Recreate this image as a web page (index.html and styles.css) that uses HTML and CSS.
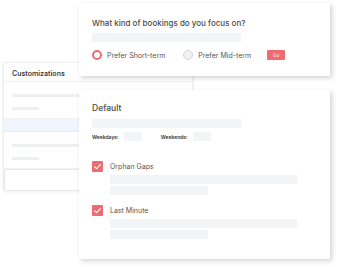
FILE: index.html
```html
<!DOCTYPE html>
<html lang="en">
<head>
    <meta charset="UTF-8">
    <meta name="viewport" content="width=device-width, initial-scale=1.0">
    <title>Booking Preferences</title>
    <link rel="stylesheet" href="styles.css">
</head>
<body>
    <div class="stage">
        <div class="card side">
            <div class="side-head">Customizations</div>
            <div class="side-row">
                <div class="line long"></div>
                <div class="line short"></div>
            </div>
            <div class="side-row active"></div>
            <div class="side-row">
                <div class="line long"></div>
                <div class="line short"></div>
            </div>
            <div class="side-foot"></div>
        </div>

        <div class="card question">
            <h2>What kind of bookings do you focus on?</h2>
            <div class="bar"></div>
            <div class="options">
                <label class="radio checked"><span class="dot"></span>Prefer Short-term</label>
                <label class="radio"><span class="dot"></span>Prefer Mid-term</label>
                <a href="#" class="go">Go</a>
            </div>
        </div>

        <div class="card settings">
            <h2>Default</h2>
            <div class="bar"></div>
            <div class="days">
                <span>Weekdays:</span><span class="box"></span>
                <span class="gap">Weekends:</span><span class="box"></span>
            </div>

            <div class="rule">
                <div class="check">
                    <svg viewBox="0 0 11 11" width="11" height="11"><path d="M2.6 5.8 L4.6 7.6 L8.4 3.6" fill="none" stroke="#fff" stroke-width="1.1" stroke-linecap="round" stroke-linejoin="round"/></svg>
                </div>
                <div class="rule-body">
                    <div class="rule-title">Orphan Gaps</div>
                    <div class="bar wide"></div>
                    <div class="bar half"></div>
                </div>
            </div>

            <div class="rule">
                <div class="check">
                    <svg viewBox="0 0 11 11" width="11" height="11"><path d="M2.6 5.8 L4.6 7.6 L8.4 3.6" fill="none" stroke="#fff" stroke-width="1.1" stroke-linecap="round" stroke-linejoin="round"/></svg>
                </div>
                <div class="rule-body">
                    <div class="rule-title">Last Minute</div>
                    <div class="bar wide"></div>
                    <div class="bar half"></div>
                </div>
            </div>
        </div>
    </div>
</body>
</html>
```

FILE: styles.css
```css
body {
    font-family: Inter, "Open Sans", sans-serif;
    margin: 0;
    padding: 0;
    background-color: #fff;
    color: #4b4b4b;
}
.stage {
    position: relative;
    width: 338px;
    height: 267px;
    overflow: hidden;
}
.card {
    position: absolute;
    background: white;
    box-sizing: border-box;
}
h2 {
    margin: 0;
    font-weight: 500;
    font-size: 8px;
    line-height: 12px;
    color: #4a4a4a;
}
.bar {
    height: 9px;
    width: 149px;
    background-color: #f3f4f6;
}

/* left panel */
.side {
    left: 3px;
    top: 62px;
    width: 190px;
    height: 129px;
    border: 1px solid #eceef1;
    border-radius: 2px;
    box-shadow: 0 1px 4px rgba(0, 0, 0, 0.06);
}
.side-head {
    height: 19px;
    padding: 6px 0 0 8px;
    box-sizing: border-box;
    font-size: 7px;
    font-weight: 600;
    color: #3c3c3c;
    border-bottom: 1px solid #f0f1f3;
}
.side-row {
    height: 37px;
    padding: 12px 0 0 8px;
    box-sizing: border-box;
    border-bottom: 1px solid #f0f1f3;
}
.side-row.active {
    height: 13px;
    background-color: #f1f5fd;
    border-bottom: 1px solid #e8ebf0;
}
.line {
    height: 3px;
    background-color: #eeeff1;
}
.line.long {
    width: 170px;
}
.line.short {
    width: 27px;
    margin-top: 10px;
}
.side-foot {
    margin: 0;
    height: 20px;
    border: 1px solid #e6e8eb;
    border-radius: 2px;
}

/* question card */
.question {
    left: 79px;
    top: 3px;
    width: 251px;
    height: 73px;
    padding: 14px 0 0 13px;
    box-shadow: 2px 2px 5px rgba(0, 0, 0, 0.18);
}
.question .bar {
    margin-top: 4px;
}
.options {
    display: flex;
    align-items: center;
    margin-top: 8px;
    font-size: 7px;
    color: #555;
}
.radio {
    display: flex;
    align-items: center;
    gap: 5px;
    margin-right: 18px;
}
.dot {
    width: 10px;
    height: 10px;
    border-radius: 50%;
    box-sizing: border-box;
    border: 1px solid #d5d5d5;
    background: #f1f1f1;
}
.radio.checked .dot {
    border: 2.5px solid #ef6b72;
    background: #fff;
}
.go {
    margin-left: -2px;
    width: 18px;
    height: 10px;
    line-height: 10px;
    text-align: center;
    background-color: #ef6b72;
    color: #fde8e9;
    font-size: 5px;
    border-radius: 1px;
    text-decoration: none;
}

/* settings card */
.settings {
    left: 79px;
    top: 90px;
    width: 251px;
    height: 169px;
    padding: 12px 0 0 13px;
    box-shadow: 2px 2px 5px rgba(0, 0, 0, 0.18);
}
.settings h2 {
    font-size: 8.5px;
}
.settings .bar {
    margin-top: 5px;
}
.days {
    display: flex;
    align-items: center;
    margin-top: 4px;
    font-size: 5px;
    font-weight: 600;
    color: #333;
}
.days .box {
    width: 18px;
    height: 9px;
    margin-left: 5px;
    background-color: #f3f4f6;
}
.days .gap {
    margin-left: 19px;
}
.rule {
    display: flex;
    gap: 7px;
    margin-top: 21px;
}
.rule + .rule {
    margin-top: 11px;
}
.check {
    width: 11px;
    height: 11px;
    border-radius: 1px;
    background-color: #ef6b72;
    margin-top: -1px;
}
.check svg {
    display: block;
}
.rule-title {
    font-size: 7px;
    line-height: 10px;
    color: #555;
}
.rule-body .bar {
    margin-top: 2px;
}
.rule-body .bar.wide {
    width: 187px;
    margin-top: 3px;
}
.rule-body .bar.half {
    width: 98px;
}
```
